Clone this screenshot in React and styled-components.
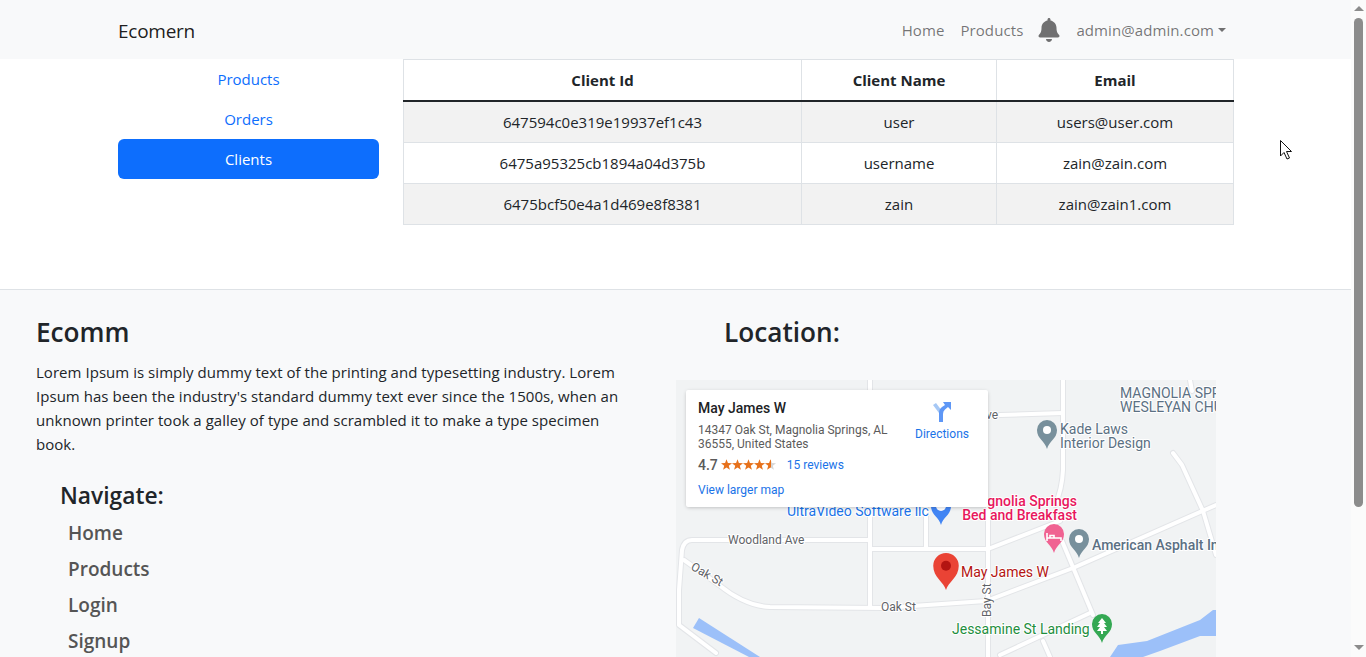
import React from "react";
import styled, { createGlobalStyle } from "styled-components";
import { FaBell } from "react-icons/fa";

const UI = `"Open Sans", "Noto Sans", sans-serif`;
const MAP = `Roboto, "Liberation Sans", sans-serif`;

const Global = createGlobalStyle`
  html, body { margin: 0; padding: 0; height: 100%; overflow: hidden; background: #fff; }
  body { font-family: ${UI}; font-size: 15px; line-height: 24px; color: #212529; }
  * { box-sizing: border-box; }
`;

const Page = styled.div`display: flex; height: 657px; overflow: hidden; position: relative;`;
const Main = styled.div`width: 1351px; flex: none; overflow: hidden;`;

const Track = styled.div`
  width: 15px; flex: none; background: #fbfbfb; display: flex; flex-direction: column; align-items: center; padding: 6px 0 7px;
`;
const Arrow = styled.div`
  width: 0; height: 0; border-left: 5px solid transparent; border-right: 5px solid transparent;
  ${p => p.$down ? "border-top: 5px solid #8c8c8c;" : "border-bottom: 5px solid #8c8c8c;"}
  flex: none;
`;
const Thumb = styled.div`width: 9px; height: 489px; margin-top: 7px; border-radius: 5px; background: #8c8c8c; flex: none;`;
const TrackGap = styled.div`flex: 1;`;

const Nav = styled.nav`
  height: 59px; background: #f8f9fa; padding: 0 125px 0 118px; display: flex; align-items: center; justify-content: space-between;
`;
const Brand = styled.a`font-size: 19px; letter-spacing: -0.25px; color: rgba(0,0,0,.9); line-height: 30px; margin-top: 2px;`;
const NavLinks = styled.div`display: flex; align-items: center;`;
const NavLink = styled.a`
  color: rgba(0,0,0,.55); font-size: 15px; letter-spacing: 0.09px; margin-right: ${p => p.$mr}px; display: flex; align-items: center;
`;
const Caret = styled.span`
  display: inline-block; width: 0; height: 0; margin-left: 4px; margin-top: 1px;
  border-top: 4.8px solid rgba(0,0,0,.55); border-left: 4.8px solid transparent; border-right: 4.8px solid transparent;
`;
const Bell = styled(FaBell)`color: rgba(0,0,0,.55); font-size: 24px; margin-right: 15px; display: block;`;

const Dash = styled.section`height: 230px; padding: 0 117px 0 118px; display: flex; align-items: flex-start;`;
const Side = styled.div`width: 261px; flex: none; margin-right: 24px; display: flex; flex-direction: column;`;
const SideLink = styled.a`
  height: 40px; display: flex; align-items: center; justify-content: center; font-size: 15px; border-radius: 6px;
  color: ${p => p.$active ? "#fff" : "#0d6efd"}; background: ${p => p.$active ? "#0d6efd" : "transparent"};
`;

const Table = styled.table`width: 830px; table-layout: fixed; border-collapse: collapse; text-align: center;`;
const Col = styled.col`width: ${p => p.$w}px;`;
const Th = styled.th`
  height: 41px; padding: 0; border: 1px solid #dee2e6; border-bottom: 2px solid #212529; font-weight: 700; font-size: 15px;
`;
const Td = styled.td`
  height: 41px; padding: 0; border: 1px solid #dee2e6; font-size: 15px; background: ${p => p.$odd ? "#f2f2f2" : "#fff"};
  tr:first-child > & { height: 42px; }
`;

const Footer = styled.footer`
  background: #f8f9fa; border-top: 1px solid #dee2e6; height: 400px; padding: 24px 0 0 36px; display: flex;
`;
const Left = styled.div`width: 590px; flex: none; margin-right: 50px;`;
const H = styled.h3`font-size: 26.2px; font-weight: 600; line-height: 36px; margin: 0 0 ${p => p.$mb}px; padding-left: ${p => p.$pl || 0}px; color: #212529;`;
const Para = styled.p`margin: 0; font-size: 15px; line-height: 24px; letter-spacing: 0.04px;`;
const NavBlock = styled.div`padding: 22px 0 0 24px;`;
const NavTitle = styled.h4`font-size: 22.8px; font-weight: 600; line-height: 36px; margin: 0 0 1px; color: #212529;`;
const FootLink = styled.a`display: block; padding-left: 8px; height: 36px; line-height: 36px; font-size: 19px; font-weight: 600; color: #555;`;

const Right = styled.div`width: 540px; flex: none;`;
const MapBox = styled.div`position: relative; width: 540px; height: 277px; margin-top: 30px; background: #f1f3f4; overflow: hidden;`;
const MapSvg = styled.svg`display: block; width: 540px; height: 277px;`;
const Lbl = styled.text`
  font-family: ${MAP}; font-size: ${p => p.$s || 14}px; font-weight: ${p => p.$w || 400}; fill: ${p => p.$c};
  stroke: #fff; stroke-width: 2px; paint-order: stroke; stroke-linejoin: round;
`;

const Card = styled.div`
  position: absolute; left: 10px; top: 10px; width: 302px; height: 117px; background: #fff; border-radius: 2px;
  box-shadow: 0 1px 4px -1px rgba(0,0,0,.3); padding: 9px 12px; font-family: ${MAP}; display: flex; justify-content: space-between;
`;
const CardMain = styled.div`width: 200px;`;
const Title = styled.div`font-size: 14px; font-weight: 500; line-height: 18px; color: #202124;`;
const Addr = styled.div`font-size: 12px; line-height: 14px; color: #5b5b5b; margin-top: 6px;`;
const Rating = styled.div`display: flex; align-items: center; margin-top: 6px; height: 16px; font-size: 14px; font-weight: 500; color: #5b5b5b;`;
const Stars = styled.svg`width: 56px; height: 12px; margin: 0 10px 0 3px; display: block; flex: none;`;
const CardLink = styled.a`font-size: 12px; font-weight: 400; color: #1a73e8;`;
const Larger = styled(CardLink)`display: block; margin-top: 9px; line-height: 16px;`;
const Dir = styled.div`width: 56px; margin: 3px 6px 0 0; display: flex; flex-direction: column; align-items: center;`;
const DirIcon = styled.svg`width: 20px; height: 20px; display: block;`;

const Pointer = styled.svg`position: absolute; left: 1279px; top: 139px; width: 14px; height: 22px;`;

const Pin = ({ x, top, h = 29, c, dot = "#fff", r = 4 }) => {
  const w = h * 0.69, R = w / 2, cy = top + R;
  return (
    <g>
      <path d={`M${x} ${top + h}C${x - 2} ${top + h - 8} ${x - R} ${cy + R - 1} ${x - R} ${cy}A${R} ${R} 0 1 1 ${x + R} ${cy}C${x + R} ${cy + R - 1} ${x + 2} ${top + h - 8} ${x} ${top + h}Z`} fill={c} />
      {dot && <circle cx={x} cy={cy} r={r} fill={dot} />}
    </g>
  );
};

const roads = [
  "M870 380V607",
  "M870 540H692Q684 540 682 550L679 590V625L716 653",
  "M684 560L719 585Q745 606 770 607L883 608L986 601L1073 568L1216 505",
  "M870 549H988L1060 521",
  "M988 506V657",
  "M1063 378V470Q1062 490 1055 505",
  "M1062 541L1093 615",
  "M1173 453L1182 465L1203 511L1216 555",
  "M1000 415L1063 413",
  "M1190 380L1192 391",
  "M926 508V547",
  "M1090 613L1000 655",
  "M1043 641L1050 657",
];

const star = i => {
  const cx = 5.5 + i * 11, pts = [];
  for (let k = 0; k < 10; k++) {
    const rad = k % 2 ? 2.4 : 5.8, a = -Math.PI / 2 + k * Math.PI / 5;
    pts.push(`${(cx + rad * Math.cos(a)).toFixed(2)},${(6 + rad * Math.sin(a)).toFixed(2)}`);
  }
  return pts.join(" ");
};

const rows = [
  ["647594c0e319e19937ef1c43", "user", "users@user.com"],
  ["6475a95325cb1894a04d375b", "username", "zain@zain.com"],
  ["6475bcf50e4a1d469e8f8381", "zain", "zain@zain1.com"],
];

export default function App() {
  return (
    <Page>
      <Global />
      <Main>
        <Nav>
          <Brand>Ecomern</Brand>
          <NavLinks>
            <NavLink $mr={16}>Home</NavLink>
            <NavLink $mr={14}>Products</NavLink>
            <Bell />
            <NavLink $mr={0}>admin@admin.com<Caret /></NavLink>
          </NavLinks>
        </Nav>
        <Dash>
          <Side>
            <SideLink>Products</SideLink>
            <SideLink>Orders</SideLink>
            <SideLink $active>Clients</SideLink>
          </Side>
          <Table>
            <colgroup><Col $w={398} /><Col $w={195} /><Col $w={237} /></colgroup>
            <thead><tr><Th>Client Id</Th><Th>Client Name</Th><Th>Email</Th></tr></thead>
            <tbody>
              {rows.map((r, i) => (
                <tr key={r[0]}>{r.map(c => <Td key={c} $odd={i % 2 === 0}>{c}</Td>)}</tr>
              ))}
            </tbody>
          </Table>
        </Dash>
        <Footer>
          <Left>
            <H $mb={10}>Ecomm</H>
            <Para>Lorem Ipsum is simply dummy text of the printing and typesetting industry. Lorem Ipsum has been the industry's standard dummy text ever since the 1500s, when an unknown printer took a galley of type and scrambled it to make a type specimen book.</Para>
            <NavBlock>
              <NavTitle>Navigate:</NavTitle>
              <FootLink>Home</FootLink>
              <FootLink>Products</FootLink>
              <FootLink>Login</FootLink>
              <FootLink>Signup</FootLink>
            </NavBlock>
          </Left>
          <Right>
            <H $mb={0} $pl={48}>Location:</H>
            <MapBox>
              <MapSvg viewBox="676 380 540 277">
                <rect x="676" y="380" width="540" height="277" fill="#f1f3f4" />
                <path d="M699 618L693 628L749 657H760Z" fill="#9cc0f9" />
                <path d="M1110 657L1118 645L1147 641L1200 620L1213 610H1216V636H1200L1160 651L1143 657Z" fill="#9cc0f9" />
                {roads.map(d => <path key={d} d={d} fill="none" stroke="#e3e5e8" strokeWidth="6" strokeLinecap="round" strokeLinejoin="round" />)}
                {roads.map(d => <path key={d + "w"} d={d} fill="none" stroke="#fff" strokeWidth="4" strokeLinecap="round" strokeLinejoin="round" />)}
                <Lbl x="1120" y="398" $c="#5b7083">MAGNOLIA SPRINGS</Lbl>
                <Lbl x="1120" y="412" $c="#5b7083">WESLEYAN CHURCH</Lbl>
                <Lbl x="998" y="419" textAnchor="end" $c="#5f6368" $s={12}>Ave</Lbl>
                <Pin x={1047} top={420} c="#78909c" />
                <Lbl x="1060" y="434" $c="#5b7083">Kade Laws</Lbl>
                <Lbl x="1060" y="448" $c="#5b7083">Interior Design</Lbl>
                <Lbl x="1077" y="506" textAnchor="end" $c="#e8175d" $w={500}>Magnolia Springs</Lbl>
                <Lbl x="1077" y="520" textAnchor="end" $c="#e8175d" $w={500}>Bed and Breakfast</Lbl>
                <Pin x={1054} top={524} c="#f06292" dot={null} />
                <path d="M1047 533v8M1047 538h14v3M1050 535.500h4v2.500h-4z" fill="none" stroke="#fff" strokeWidth="1.600" />
                <Pin x={1079} top={529} c="#78909c" />
                <Lbl x="1092" y="550" $c="#5b7083" $w={500}>American Asphalt Inc</Lbl>
                <Pin x={946} top={553} h={37} c="#ea4335" dot="#b31412" r={5} />
                <Lbl x="961" y="577" $c="#b31412">May James W</Lbl>
                <Lbl x="952" y="634" $c="#1e8e3e">Jessamine St Landing</Lbl>
                <Pin x={1102} top={614} c="#34a853" dot={null} />
                <path d="M1102 618L1098 623H1100L1097 627H1100L1097 631H1107L1104 627H1107L1104 623H1106ZM1101 631h2v3h-2z" fill="#fff" />
                <Pin x={941} top={496} c="#4285f4" r={5} />
                <Lbl x="787" y="516" $c="#1a73e8">UltraVideo Software llc</Lbl>
                <Lbl x="728" y="544" $c="#5f6368" $s={12}>Woodland Ave</Lbl>
                <Lbl x="881" y="611" $c="#5f6368" $s={12}>Oak St</Lbl>
                <Lbl x="0" y="0" transform="translate(690 569) rotate(30)" $c="#5f6368" $s={12}>Oak St</Lbl>
                <Lbl x="0" y="0" transform="translate(991 617) rotate(-90)" $c="#5f6368" $s={12}>Bay St</Lbl>
              </MapSvg>
              <Card>
                <CardMain>
                  <Title>May James W</Title>
                  <Addr>14347 Oak St, Magnolia Springs, AL 36555, United States</Addr>
                  <Rating>
                    4.7
                    <Stars viewBox="0 0 56 12">
                      <defs>
                        <linearGradient id="partial">
                          <stop offset="55%" stopColor="#e7711b" />
                          <stop offset="55%" stopColor="#d6d6d6" />
                        </linearGradient>
                      </defs>
                      {[0, 1, 2, 3, 4].map(i => <polygon key={i} points={star(i)} fill={i === 4 ? "url(#partial)" : "#e7711b"} />)}
                    </Stars>
                    <CardLink>15 reviews</CardLink>
                  </Rating>
                  <Larger>View larger map</Larger>
                </CardMain>
                <Dir>
                  <DirIcon viewBox="0 0 20 20">
                    <path d="M1 3L4 1L10 9V20H7V11Z" fill="#a6c8f5" />
                    <path d="M7 20V11Q7 7 10 5L13 3L11 0H19V8L16 5L13 7.500Q11 9 11 12V20Z" fill="#5e97f6" />
                  </DirIcon>
                  <CardLink>Directions</CardLink>
                </Dir>
              </Card>
            </MapBox>
          </Right>
        </Footer>
      </Main>
      <Track>
        <Arrow />
        <Thumb />
        <TrackGap />
        <Arrow $down />
      </Track>
      <Pointer viewBox="0 0 14 22">
        <path d="M1.500 1.500V17L5 13.500L8 20L10.500 19L7.500 12.500H12.500Z" fill="#fff" stroke="#111" strokeWidth="1" strokeLinejoin="miter" />
      </Pointer>
    </Page>
  );
}
